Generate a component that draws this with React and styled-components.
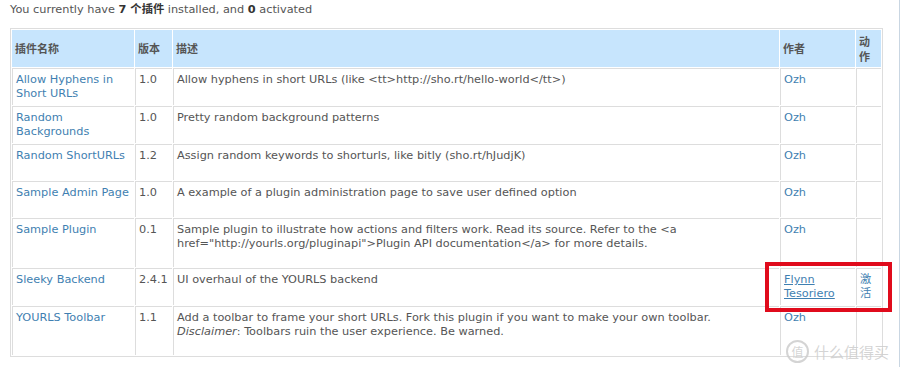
import React from "react";
import styled, { createGlobalStyle } from "styled-components";

const plugins = [
  { name: "Allow Hyphens in Short URLs", ver: "1.0", desc: "Allow hyphens in short URLs (like <tt>http://sho.rt/hello-world</tt>)", author: "Ozh" },
  { name: "Random Backgrounds", ver: "1.0", desc: "Pretty random background patterns", author: "Ozh" },
  { name: "Random ShortURLs", ver: "1.2", desc: "Assign random keywords to shorturls, like bitly (sho.rt/hJudjK)", author: "Ozh" },
  { name: "Sample Admin Page", ver: "1.0", desc: "A example of a plugin administration page to save user defined option", author: "Ozh" },
  {
    name: "Sample Plugin",
    ver: "0.1",
    desc: (
      <>
        Sample plugin to illustrate how actions and filters work. Read its source. Refer to the &lt;a
        <br />
        href="http://yourls.org/pluginapi"&gt;Plugin API documentation&lt;/a&gt; for more details.
      </>
    ),
    author: "Ozh",
    tall: true,
  },
  { name: "Sleeky Backend", ver: "2.4.1", desc: "UI overhaul of the YOURLS backend", author: "Flynn Tesoriero", underline: true, action: "激活" },
  {
    name: "YOURLS Toolbar",
    ver: "1.1",
    desc: (
      <>
        Add a toolbar to frame your short URLs. Fork this plugin if you want to make your own toolbar.
        <br />
        <em>Disclaimer</em>: Toolbars ruin the user experience. Be warned.
      </>
    ),
    author: "Ozh",
    tall: true,
  },
];

function App() {
  return (
    <>
      <GlobalStyle />
      <Page>
        <Summary>
          You currently have <b>7 个插件</b> installed, and <b>0</b> activated
        </Summary>
        <Table>
          <colgroup>
            <col style={{ width: 122 }} />
            <col style={{ width: 37 }} />
            <col />
            <col style={{ width: 75 }} />
            <col style={{ width: 25 }} />
          </colgroup>
          <thead>
            <tr>
              <Th>插件名称</Th>
              <Th>版本</Th>
              <Th>描述</Th>
              <Th>作者</Th>
              <Th stack>动作</Th>
            </tr>
          </thead>
          <tbody>
            {plugins.map((p) => (
              <tr key={p.name}>
                <Td>
                  <PluginLink>{p.name}</PluginLink>
                </Td>
                <Td>{p.ver}</Td>
                <Td tall={p.tall}>{p.desc}</Td>
                <Td>
                  <PluginLink underline={p.underline}>{p.author}</PluginLink>
                </Td>
                <Td>{p.action && <PluginLink>{p.action}</PluginLink>}</Td>
              </tr>
            ))}
          </tbody>
        </Table>
        <Highlight />
        <Watermark>
          <Badge>值</Badge>什么值得买
        </Watermark>
      </Page>
      <SideRule />
    </>
  );
}

export default App;

const GlobalStyle = createGlobalStyle`
  body {
    margin: 0;
    background: #fff;
    font-family: "DejaVu Sans", Verdana, "Noto Sans CJK SC", sans-serif;
    font-size: 11.3px;
    color: #444;
  }
`;

const Page = styled.div`
  position: relative;
  width: 902px;
  height: 367px;
  padding: 3px 0 0 10px;
  box-sizing: border-box;
  overflow: hidden;
`;

const Summary = styled.div`
  line-height: 14px;
  color: #555;
  margin-bottom: 11px;
  b {
    color: #333;
  }
`;

const Table = styled.table`
  width: 873px;
  border-collapse: separate;
  border-spacing: 1px;
  border: 1px solid #ddd;
  table-layout: fixed;
  background: #fff;
`;

const Th = styled.th`
  background: #c7e5fd;
  text-align: left;
  vertical-align: middle;
  font-weight: bold;
  color: #555;
  font-size: 11px;
  height: 37px;
  padding: 0 2px 0 3px;
  box-sizing: border-box;
  line-height: 15px;
  font-family: "Noto Sans CJK SC", "DejaVu Sans", sans-serif;
  word-break: ${(p) => (p.stack ? "break-all" : "normal")};
  ${(p) => p.stack && "padding-right: 8px;"}
`;

const Td = styled.td`
  vertical-align: top;
  height: 36px;
  padding: 4px 2px ${(p) => (p.tall ? "16px" : "4px")} 3px;
  box-sizing: border-box;
  line-height: 14px;
  color: #555;
  border-top: 1px solid #ddd;
  border-left: 1px solid #ddd;
  tr td:first-child & {
    border-left: none;
  }
  em {
    font-style: italic;
  }
`;

const PluginLink = styled.a`
  color: #3f7fb1;
  text-decoration: ${(p) => (p.underline ? "underline" : "none")};
  cursor: pointer;
`;

const Highlight = styled.div`
  position: absolute;
  left: 765px;
  top: 262px;
  width: 127px;
  height: 50px;
  border: 4px solid #e00b1c;
  box-sizing: border-box;
  pointer-events: none;
`;

const Watermark = styled.div`
  position: absolute;
  left: 786px;
  top: 340px;
  display: flex;
  align-items: center;
  gap: 3px;
  color: rgba(205, 205, 205, 0.85);
  font-size: 15px;
  font-family: "Noto Sans CJK SC", sans-serif;
  line-height: 22px;
`;

const Badge = styled.span`
  display: inline-flex;
  align-items: center;
  justify-content: center;
  width: 19px;
  height: 19px;
  border: 2px solid rgba(205, 205, 205, 0.85);
  border-radius: 50%;
  font-size: 12px;
  margin-right: 2px;
`;

const SideRule = styled.div`
  position: fixed;
  top: 0;
  left: 899px;
  width: 1px;
  height: 367px;
  background: #c9d6e2;
`;
